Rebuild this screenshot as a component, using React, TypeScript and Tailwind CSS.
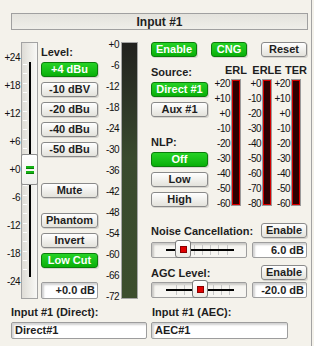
import clsx from 'clsx'

const sunken = 'border border-[#9d9d9d] rounded-[2px] shadow-[inset_2px_2px_2px_rgba(0,0,0,0.18)]'

function Btn({ label, on = false, className }: { label: string; on?: boolean; className?: string }) {
  return (
    <div
      className={clsx(
        'h-[15px] rounded-[3px] border flex items-center justify-center text-[11px] font-bold leading-none shadow-[1px_1px_0_rgba(0,0,0,0.12)]',
        on
          ? 'bg-gradient-to-b from-[#25d225] to-[#08b008] border-[#0a7d0a] text-white'
          : 'bg-gradient-to-b from-white to-[#e3e2db] border-[#8a8a8a] text-[#1e1e1e]',
        className,
      )}
    >
      {label}
    </div>
  )
}

function Scale({ values, className }: { values: string[]; className?: string }) {
  return (
    <div className={clsx('flex flex-col justify-between items-end text-[10px] leading-[12px] tracking-[-0.5px] text-[#111]', className)}>
      {values.map((v) => (
        <span key={v} className="h-[12px]">{v}</span>
      ))}
    </div>
  )
}

function Fader() {
  const ticks = Array.from({ length: 23 }, (_, i) => 21 + i * (28 / 3))
  return (
    <div className="relative ml-[1px] w-[17px] h-[257px] border border-[#a3a3a3] bg-gradient-to-r from-[#dedcd6] via-[#ecebe6] to-[#f8f8f6]">
      {ticks.map((t) => (
        <div key={t} className="absolute left-[1px] w-[4px] h-px bg-white" style={{ top: Math.round(t) }} />
      ))}
      <div className="absolute left-[7px] top-[19px] w-[2px] h-[215px] bg-black" />
      <div className="absolute -left-px top-[111px] w-[17px] h-[31px] border border-[#8f8f8f] rounded-[2px] bg-gradient-to-b from-white to-[#efefec] flex flex-col items-center justify-center gap-[2px]">
        <div className="w-[8px] h-[3px] bg-[#13b313] border-b border-[#0a7d0a]" />
        <div className="w-[8px] h-[3px] bg-[#13b313] border-b border-[#0a7d0a]" />
      </div>
    </div>
  )
}

function Slider({ knob, ticks }: { knob: number; ticks: number[] }) {
  return (
    <div className={clsx('relative w-[96px] h-[16px] bg-[#f6f5f1]', sunken)}>
      {ticks.map((t) => (
        <div key={t} className="absolute top-[2px] h-[10px] w-px bg-[#c6c6c6]" style={{ left: t }} />
      ))}
      <div className="absolute left-[14px] w-[68px] top-[6px] h-[2px] bg-black" />
      <div
        className="absolute -top-[3px] w-[16px] h-[18px] rounded-[3px] border border-[#7a7a7a] bg-gradient-to-b from-white to-[#ecebe6] flex items-center justify-center"
        style={{ left: knob }}
      >
        <div className="w-[7px] h-[7px] bg-[#e00000] border border-[#8a0000]" />
      </div>
    </div>
  )
}

function Bar() {
  return (
    <div className="w-[10px] h-[127px] border border-[#9a9a9a] flex">
      <div className="flex-1 border border-[#d40000] bg-[#2e0000]" />
    </div>
  )
}

function MeterGroup({ title, values, labelW }: { title: string; values: string[]; labelW: string }) {
  return (
    <div className="flex flex-col">
      <div className="flex h-[19px] items-center">
        <div className={labelW} />
        <div className="w-[10px] flex justify-center text-[11px] font-bold whitespace-nowrap">{title}</div>
      </div>
      <div className="flex items-start">
        <Scale values={values} className={clsx('-mt-[1px] h-[132px] pr-[1px]', labelW)} />
        <Bar />
      </div>
    </div>
  )
}

export default function App() {
  const faderScale = ['+24', '+18', '+12', '+6', '+0', '-6', '-12', '-18', '-24']
  const meterScale = ['+0', '-6', '-12', '-18', '-24', '-30', '-36', '-42', '-48', '-54', '-60', '-66', '-72']
  const erl = ['+20', '+10', '+0', '-10', '-20', '-30', '-40', '-50', '-60']
  const erle = ['+0', '-10', '-20', '-30', '-40', '-50', '-60', '-70', '-80']

  return (
    <div className="w-[314px] h-[346px] bg-[#f4f2eb] overflow-hidden font-['Liberation_Sans',Arial,sans-serif] text-[#1e1e1e]">
      <div className="w-[312px] h-full border-r border-[#a3a3a3] flex flex-col">
        <div className="ml-[11px] mt-[13px] w-[297px] h-[17px] border border-[#a0a0a0] bg-gradient-to-b from-[#e4e3dd] to-[#efeee9] flex items-center justify-center text-[12px] font-bold">
          Input #1
        </div>

        <div className="flex mt-[12px] h-[257px]">
          {/* left: fader, level buttons, meter */}
          <div className="flex items-start w-[138px]">
            <Scale values={faderScale} className="w-[20px] mt-[10px] h-[236px]" />
            <Fader />
            <div className="ml-[3px] w-[57px] flex flex-col">
              <div className="h-[20px] leading-[20px] text-[11px] font-bold">Level:</div>
              <div className="flex flex-col gap-[5px]">
                <Btn label="+4 dBu" on />
                <Btn label="-10 dBV" />
                <Btn label="-20 dBu" />
                <Btn label="-40 dBu" />
                <Btn label="-50 dBu" />
              </div>
              <Btn label="Mute" className="mt-[26px]" />
              <Btn label="Phantom" className="mt-[15px]" />
              <Btn label="Invert" className="mt-[5px]" />
              <Btn label="Low Cut" on className="mt-[5px]" />
              <div className={clsx('mt-[14px] h-[17px] bg-white flex items-center justify-end pr-[2px] text-[11px] font-bold', sunken)}>
                +0.0 dB
              </div>
            </div>
            <Scale values={meterScale} className="w-[21px] -mt-[3px] h-[264px]" />
            <div className="ml-[2px] w-[17px] h-[257px] border border-[#a5a5a5] bg-gradient-to-b from-[#22221f] via-[#394a2e] via-45% to-[#3c4e2d]" />
          </div>

          {/* right: AEC section */}
          <div className="ml-[13px] w-[156px] flex flex-col">
            <div className="flex justify-between">
              <Btn label="Enable" on className="w-[46px]" />
              <Btn label="CNG" on className="w-[36px]" />
              <Btn label="Reset" className="w-[46px]" />
            </div>
            <div className="flex mt-[5px] h-[146px]">
              <div className="w-[57px] flex flex-col">
                <div className="h-[20px] leading-[20px] text-[11px] font-bold">Source:</div>
                <Btn label="Direct #1" on />
                <Btn label="Aux #1" className="mt-[5px]" />
                <div className="mt-[15px] h-[20px] leading-[20px] text-[11px] font-bold">NLP:</div>
                <Btn label="Off" on />
                <Btn label="Low" className="mt-[5px]" />
                <Btn label="High" className="mt-[5px]" />
              </div>
              <div className="flex">
                <MeterGroup title="ERL" values={erl} labelW="w-[23px]" />
                <MeterGroup title="ERLE" values={erle} labelW="w-[21px]" />
                <MeterGroup title="TER" values={erl} labelW="w-[19px]" />
              </div>
            </div>

            <div className="mt-[15px] flex justify-between items-center h-[15px]">
              <span className="text-[11px] font-bold pt-[2px]">Noise Cancellation:</span>
              <Btn label="Enable" className="w-[46px]" />
            </div>
            <div className="mt-[4px] flex justify-between">
              <Slider knob={23} ticks={[42, 50, 58, 66, 75]} />
              <div className={clsx('w-[55px] h-[16px] bg-white flex items-center justify-end pr-[2px] text-[11px] font-bold', sunken)}>
                6.0 dB
              </div>
            </div>
            <div className="mt-[7px] flex justify-between items-center h-[15px]">
              <span className="text-[11px] font-bold pt-[2px]">AGC Level:</span>
              <Btn label="Enable" className="w-[46px]" />
            </div>
            <div className="mt-[2px] flex justify-between">
              <Slider knob={40} ticks={[24, 32, 61, 69, 77]} />
              <div className={clsx('w-[55px] h-[16px] bg-white flex items-center justify-end pr-[2px] text-[11px] font-bold', sunken)}>
                -20.0 dB
              </div>
            </div>
          </div>
        </div>

        <div className="flex mt-[5px]">
          <div className="ml-[11px] w-[140px] flex flex-col">
            <div className="h-[16px] leading-[16px] text-[11px] font-bold">Input #1 (Direct):</div>
            <div className={clsx('mt-[2px] w-[136px] h-[17px] bg-white flex items-center pl-[3px] text-[11px] font-bold', sunken)}>
              Direct#1
            </div>
          </div>
          <div className="w-[137px] flex flex-col">
            <div className="h-[16px] leading-[16px] pl-[1px] text-[11px] font-bold">Input #1 (AEC):</div>
            <div className={clsx('mt-[2px] w-[137px] h-[17px] bg-white flex items-center pl-[3px] text-[11px] font-bold', sunken)}>
              AEC#1
            </div>
          </div>
        </div>
      </div>
    </div>
  )
}
